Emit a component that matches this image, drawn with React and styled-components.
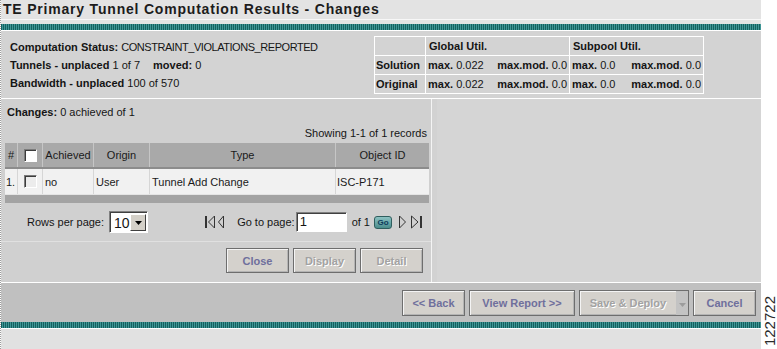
import React from 'react';
import styled, { createGlobalStyle } from 'styled-components';

const GlobalStyle = createGlobalStyle`
  html, body { margin: 0; padding: 0; background: #fff; }
  body { font-family: "Liberation Sans", Arial, sans-serif; font-size: 11px; color: #151515; }
  * { box-sizing: border-box; }
`;

const FONT = `"Liberation Sans", Arial, sans-serif`;

const Page = styled.div`
  display: flex;
  width: 777px;
  height: 349px;
  overflow: hidden;
  background: #fff;
`;

const Main = styled.div`
  width: 761px;
  display: flex;
  flex-direction: column;
  border-left: 1px dotted #9c9c9c;
`;

const Header = styled.header`
  height: 24px;
  background: #e3e3e3;
`;

const Title = styled.h1`
  margin: 0;
  height: 20px;
  border-bottom: 1px solid #f7f7f7;
  padding-left: 2px;
  font: bold 14px/18px ${FONT};
  letter-spacing: 0.8px;
  color: #1c1c1c;
  white-space: nowrap;
`;

const Stripe = styled.div`
  height: 7px;
  flex: none;
  border-bottom: 1px solid #fff;
  background: repeating-linear-gradient(90deg, #15605f 0 1px, #3f9696 1px 2px);
`;

const StatusPanel = styled.section`
  display: flex;
  align-items: flex-start;
  height: 68px;
  background: #d3d3d3;
  border-bottom: 1px solid #fff;
  padding: 5px 0 0 9px;
`;

const StatusText = styled.div`
  width: 364px;
  padding-top: 2px;
  line-height: 18px;
  white-space: nowrap;
`;

const Label = styled.b`
  font-weight: bold;
  margin-left: ${p => p.$ml || 0}px;
`;

const Caps = styled.span`
  letter-spacing: -0.45px;
`;

const UtilTable = styled.table`
  border-collapse: collapse;
  table-layout: fixed;
  width: 330px;
`;

const UtilCell = styled.td`
  border: 1px solid #fff;
  height: 19px;
  padding: 0 2px 0 ${p => p.$pl ?? 2}px;
  width: ${p => p.$w}px;
  font-weight: ${p => (p.$bold ? 'bold' : 'normal')};
  white-space: nowrap;
  line-height: 17px;
`;

const Pair = styled.div`
  display: flex;
  justify-content: space-between;
`;

const Content = styled.div`
  display: flex;
  height: 184px;
  border-bottom: 1px solid #fff;
`;

const ChangesPanel = styled.section`
  width: 431px;
  display: flex;
  flex-direction: column;
  background: #d0d0d0;
  border-right: 1px solid #f4f4f4;
`;

const SidePanel = styled.div`
  flex: 1;
  background: #d5d5d5;
  border-left: 5px solid #d2d2d2;
`;

const Summary = styled.div`
  height: 26px;
  padding: 6px 0 0 6px;
  line-height: 14px;
`;

const Records = styled.div`
  height: 18px;
  padding-right: 4px;
  text-align: right;
  line-height: 16px;
`;

const GridRow = styled.div`
  display: grid;
  grid-template-columns: 13px 25px 51px 56px 186px 93px;
  margin: 0 2px 0 4px;
  height: 26px;
  background: ${p => (p.$head ? '#a9a9a9' : '#f1f1f1')};
  border-bottom: ${p => (p.$head ? '2px solid #8c8c8c' : '1px solid #e4e4e4')};
`;

const Cell = styled.div`
  display: flex;
  align-items: center;
  justify-content: ${p => (p.$center ? 'center' : 'flex-start')};
  padding-left: ${p => (p.$center ? 0 : p.$pl ?? 2)}px;
  border-right: 1px solid ${p => (p.$head ? '#c6c6c6' : '#d6d6d6')};
  white-space: nowrap;
  color: #1a1a1a;
  &:last-child { border-right: none; }
`;

const Check = styled.span`
  display: inline-block;
  width: 13px;
  height: 13px;
  background: ${p => (p.$light ? '#fff' : '#ececec')};
  border: 1px solid;
  border-color: #7c7c7c #fff #fff #7c7c7c;
  box-shadow: inset 1px 1px 0 #3c3c3c;
`;

const FootBar = styled.div`
  height: 8px;
  margin: 0 2px 0 4px;
  background: #a3a3a3;
`;

const Pager = styled.div`
  height: 39px;
  display: flex;
  align-items: center;
  padding: 0 8px 0 26px;
  border-bottom: 1px solid #e0e0e0;
`;

const PagerText = styled.span`
  margin-left: ${p => p.$ml || 0}px;
  white-space: nowrap;
`;

const Select = styled.div`
  display: flex;
  align-items: center;
  width: 39px;
  height: 22px;
  margin-left: 5px;
  background: #fff;
  border: 1px solid;
  border-color: #808080 #fff #fff #808080;
  box-shadow: inset 1px 1px 0 #404040;
  padding: 1px 1px 0 4px;
`;

const SelectValue = styled.span`
  flex: 1;
  font-size: 14px;
  line-height: 18px;
`;

const SelectArrow = styled.span`
  width: 16px;
  height: 17px;
  display: flex;
  align-items: center;
  justify-content: center;
  background: #d4d0c8;
  border: 1px solid;
  border-color: #fff #404040 #404040 #fff;
`;

const NavGroup = styled.div`
  display: flex;
  align-items: center;
  margin-left: auto;
`;

const NavIcon = styled.svg`
  margin-left: ${p => p.$ml || 0}px;
  display: block;
`;

const PageInput = styled.div`
  width: 51px;
  height: 20px;
  margin-left: 1px;
  background: #fff;
  border: 1px solid;
  border-color: #808080 #fff #fff #808080;
  box-shadow: inset 1px 1px 0 #404040;
  padding-left: 3px;
  font-size: 13px;
  line-height: 18px;
`;

const GoButton = styled.span`
  width: 18px;
  height: 13px;
  margin-left: 4px;
  border-radius: 3px;
  border: 1px solid #2f5e5e;
  background: linear-gradient(#8cc2c2, #4a8c8c);
  font: bold 8px/11px ${FONT};
  color: #0e3c5c;
  text-align: center;
`;

const ButtonRow = styled.div`
  flex: 1;
  display: flex;
  justify-content: flex-end;
  align-items: flex-start;
  gap: 4px;
  padding: 6px 8px 0 0;
`;

const Button = styled.button`
  width: ${p => p.$w}px;
  height: ${p => p.$h || 25}px;
  padding: 0;
  background: #d4d1cc;
  border: 1px solid #6e6e6e;
  box-shadow: inset 1px 1px 0 #f4f4f4, inset -1px -1px 0 #b4b4b4;
  font: bold 11px ${FONT};
  color: ${p => (p.disabled ? '#a2a2a2' : '#6f6f9c')};
  text-shadow: ${p => (p.disabled ? '1px 1px 0 #fff' : 'none')};
  display: flex;
  align-items: stretch;
`;

const ButtonLabel = styled.span`
  flex: 1;
  display: flex;
  align-items: center;
  justify-content: center;
`;

const DropPart = styled.span`
  width: 12px;
  display: flex;
  align-items: center;
  justify-content: center;
  padding-top: 4px;
  background: #c3c3c3;
`;

const ActionBar = styled.div`
  height: 39px;
  flex: none;
  display: flex;
  align-items: center;
  justify-content: flex-end;
  gap: 4px;
  padding-right: 5px;
  background: #c0c0c0;
`;

const Footer = styled.div`
  flex: 1;
  background: #e1e1e1;
`;

const Side = styled.aside`
  flex: 1;
  display: flex;
  align-items: flex-end;
  justify-content: center;
  padding-bottom: 3px;
`;

const FigureNo = styled.span`
  writing-mode: vertical-rl;
  transform: rotate(180deg);
  font: 15px/15px ${FONT};
  color: #2a2a2a;
`;

const First = () => (
  <NavIcon width="10" height="14" viewBox="0 0 10 14">
    <rect x="0" y="1" width="2" height="12" fill="#333" />
    <polygon points="9.5,1 3.5,7 9.5,13" fill="none" stroke="#333" strokeWidth="1" />
  </NavIcon>
);
const Prev = ({ ml }) => (
  <NavIcon $ml={ml} width="6" height="14" viewBox="0 0 6 14">
    <polygon points="5.5,1 0.5,7 5.5,13" fill="none" stroke="#333" strokeWidth="1" />
  </NavIcon>
);
const Next = ({ ml }) => (
  <NavIcon $ml={ml} width="7" height="14" viewBox="0 0 7 14">
    <polygon points="0.5,1 6.5,7 0.5,13" fill="none" stroke="#333" strokeWidth="1" />
  </NavIcon>
);
const Last = ({ ml }) => (
  <NavIcon $ml={ml} width="12" height="14" viewBox="0 0 12 14">
    <polygon points="0.5,1 7,7 0.5,13" fill="none" stroke="#333" strokeWidth="1" />
    <rect x="9" y="1" width="2" height="12" fill="#333" />
  </NavIcon>
);

const utilRows = [
  { name: 'Solution', g: ['0.022', '0.0'], s: ['0.0', '0.0'] },
  { name: 'Original', g: ['0.022', '0.0'], s: ['0.0', '0.0'] },
];

export default function App() {
  return (
    <>
      <GlobalStyle />
      <Page>
        <Main>
          <Header>
            <Title>TE Primary Tunnel Computation Results - Changes</Title>
          </Header>
          <Stripe />
          <StatusPanel>
            <StatusText>
              <div><Label>Computation Status:</Label> <Caps>CONSTRAINT_VIOLATIONS_REPORTED</Caps></div>
              <div><Label>Tunnels - unplaced</Label> 1 of 7 <Label $ml={10}>moved:</Label> 0</div>
              <div><Label>Bandwidth - unplaced</Label> 100 of 570</div>
            </StatusText>
            <UtilTable>
              <tbody>
                <tr>
                  <UtilCell $w={51} />
                  <UtilCell $w={144} $bold $pl={3}>Global Util.</UtilCell>
                  <UtilCell $w={134} $bold $pl={3}>Subpool Util.</UtilCell>
                </tr>
                {utilRows.map(r => (
                  <tr key={r.name}>
                    <UtilCell $w={51} $bold $pl={1}>{r.name}</UtilCell>
                    <UtilCell $w={144}>
                      <Pair>
                        <span><Label>max.</Label> {r.g[0]}</span>
                        <span><Label>max.mod.</Label> {r.g[1]}</span>
                      </Pair>
                    </UtilCell>
                    <UtilCell $w={134}>
                      <Pair>
                        <span><Label>max.</Label> {r.s[0]}</span>
                        <span><Label>max.mod.</Label> {r.s[1]}</span>
                      </Pair>
                    </UtilCell>
                  </tr>
                ))}
              </tbody>
            </UtilTable>
          </StatusPanel>
          <Content>
            <ChangesPanel>
              <Summary><Label>Changes:</Label> 0 achieved of 1</Summary>
              <Records>Showing 1-1 of 1 records</Records>
              <GridRow $head>
                <Cell $head $center>#</Cell>
                <Cell $head $center><Check $light /></Cell>
                <Cell $head $center>Achieved</Cell>
                <Cell $head $center>Origin</Cell>
                <Cell $head $center>Type</Cell>
                <Cell $head $center>Object ID</Cell>
              </GridRow>
              <GridRow>
                <Cell $pl={1}>1.</Cell>
                <Cell $center><Check /></Cell>
                <Cell>no</Cell>
                <Cell>User</Cell>
                <Cell>Tunnel Add Change</Cell>
                <Cell $pl={1}>ISC-P171</Cell>
              </GridRow>
              <FootBar />
              <Pager>
                <PagerText>Rows per page:</PagerText>
                <Select>
                  <SelectValue>10</SelectValue>
                  <SelectArrow>
                    <svg width="7" height="4" viewBox="0 0 7 4"><polygon points="0,0 7,0 3.5,4" fill="#000" /></svg>
                  </SelectArrow>
                </Select>
                <NavGroup>
                  <First />
                  <Prev ml={3} />
                  <PagerText $ml={13}>Go to page:</PagerText>
                  <PageInput>1</PageInput>
                  <PagerText $ml={5}>of 1</PagerText>
                  <GoButton>Go</GoButton>
                  <Next ml={7} />
                  <Last ml={5} />
                </NavGroup>
              </Pager>
              <ButtonRow>
                <Button $w={63}><ButtonLabel>Close</ButtonLabel></Button>
                <Button $w={63} disabled><ButtonLabel>Display</ButtonLabel></Button>
                <Button $w={63} disabled><ButtonLabel>Detail</ButtonLabel></Button>
              </ButtonRow>
            </ChangesPanel>
            <SidePanel />
          </Content>
          <ActionBar>
            <Button $w={63} $h={26}><ButtonLabel>&lt;&lt; Back</ButtonLabel></Button>
            <Button $w={106} $h={26}><ButtonLabel>View Report &gt;&gt;</ButtonLabel></Button>
            <Button $w={110} $h={26} disabled>
              <ButtonLabel>Save &amp; Deploy</ButtonLabel>
              <DropPart>
                <svg width="7" height="4" viewBox="0 0 7 4"><polygon points="0,0 7,0 3.5,4" fill="#9c9c9c" /></svg>
              </DropPart>
            </Button>
            <Button $w={63} $h={26}><ButtonLabel>Cancel</ButtonLabel></Button>
          </ActionBar>
          <Stripe />
          <Footer />
        </Main>
        <Side>
          <FigureNo>122722</FigureNo>
        </Side>
      </Page>
    </>
  );
}
